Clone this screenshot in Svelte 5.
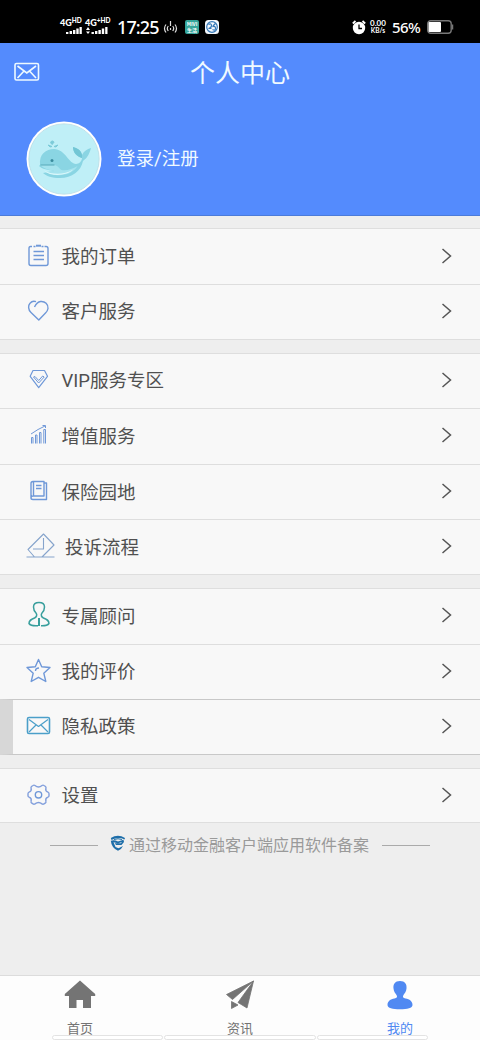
<script lang="ts">
	interface Item {
		icon: string;
		label: string;
		pressed?: boolean;
	}

	const groups: Item[][] = [
		[
			{ icon: 'order', label: '我的订单' },
			{ icon: 'heart', label: '客户服务' }
		],
		[
			{ icon: 'vip', label: 'VIP服务专区' },
			{ icon: 'chart', label: '增值服务' },
			{ icon: 'book', label: '保险园地' },
			{ icon: 'complaint', label: '投诉流程' }
		],
		[
			{ icon: 'adviser', label: '专属顾问' },
			{ icon: 'star', label: '我的评价' },
			{ icon: 'mail', label: '隐私政策', pressed: true }
		],
		[{ icon: 'gear', label: '设置' }]
	];

	const tabs = [
		{ icon: 'home', label: '首页' },
		{ icon: 'news', label: '资讯' },
		{ icon: 'mine', label: '我的' }
	];

	let active = $state('mine');
</script>

<div class="page">
	<div class="status">
		<div class="signal first">
			<span class="net">4G<small>HD</small></span>
			<svg width="17" height="7" viewBox="0 0 17 7" fill="#fff">
				<path d="M1 5h2.400v2H1zM4.600 4h2.400v3h-2.400zM8 3h2.400v4h-2.400zM11.300 1.500h2.400V7h-2.400zM14.500 0h2.300v7h-2.300z" />
			</svg>
		</div>
		<div class="signal second">
			<span class="net">4G<small>+HD</small></span>
			<svg width="22" height="7" viewBox="0 0 22 7" fill="#fff">
				<path d="M0 3l2-3 2 3zM0 4.500h4L2 7zM5.500 5h2.400v2H5.500zM9 4h2.400v3H9zM12.400 3h2.400v4h-2.400zM15.800 1.500h2.400V7h-2.400zM19.200 0h2.300v7h-2.300z" />
			</svg>
		</div>
		<span class="time">17:25</span>
		<svg class="cast" width="15" height="13" viewBox="0 0 15 13" fill="none" stroke="#ddd" stroke-width="1.200">
			<path d="M3 3.500q-3 4 0 8M5.300 5q-2 2.500 0 5M12 3.500q3 4 0 8M9.700 5q2 2.500 0 5M7.500 0v5M7.500 7v2" />
		</svg>
		<span class="app-badge">MIVI<br />生活</span>
		<svg class="app-logo" width="14" height="14" viewBox="0 0 14 14">
			<rect width="14" height="14" rx="3.500" fill="#f4f8fc" />
			<g fill="none" stroke="#3478b8" stroke-width="1.200">
				<circle cx="7" cy="7" r="5.300" />
				<path d="M3.500 4.500q3-1.500 3 1t-3 3h3M7.500 9.500q3 1.500 3-1t-2-2 2-3" />
			</g>
		</svg>
		<svg class="alarm" width="14" height="15" viewBox="0 0 14 15">
			<circle cx="7" cy="8" r="6.200" fill="#fff" />
			<path d="M.8 3.500L3.500 1M13.200 3.500L10.500 1" stroke="#fff" stroke-width="1.800" />
			<path d="M7 4.500V8.500h3" fill="none" stroke="#000" stroke-width="1.300" />
		</svg>
		<span class="speed">0.00<small>KB/s</small></span>
		<span class="percent">56%</span>
		<svg class="battery" width="27" height="14" viewBox="0 0 27 14">
			<rect x=".7" y=".7" width="23.500" height="12.600" rx="3" fill="none" stroke="#777" stroke-width="1.400" />
			<path d="M25.500 4.500v5" stroke="#777" stroke-width="1.500" />
			<rect x="1.500" y="2" width="12.500" height="10" rx="1" fill="#fff" />
		</svg>
	</div>

	<header>
		<div class="bar">
			<svg class="message" width="26" height="20" viewBox="0 0 26 20" fill="none" stroke="#eefaff" stroke-width="1.600">
				<rect x="1" y="1.500" width="23.500" height="16.500" rx="1.500" />
				<path d="M3.500 4l9.300 7L22 4M3.500 16l6.500-7M22 16l-6.500-7" />
			</svg>
			<h1>个人中心</h1>
		</div>
		<div class="user">
			<svg width="76" height="76" viewBox="0 0 76 76">
				<circle cx="38" cy="38" r="37.500" fill="#fff" />
				<circle cx="38" cy="38" r="35" fill="#bfeff7" />
				<circle cx="38" cy="38" r="35.200" fill="none" stroke="#a9d5df" stroke-width=".7" />
				<path d="M14 44C13 33 20 28 28 28c11 0 15 15 22 15 3 0 6-3 6-6-6-2-9-6-9-11 4 1 8 3 9 8 2-4 5-6 9-7-2 7-4 10-8 13-2 10-11 17-23 17-8 0-14-2-17-5l11-2c-6-1-12-2-15-5z" fill="#8ad5e3" />
				<path d="M47 26c4 1 8 3 9 8l0 3c-6-2-9-6-9-11z" fill="#72c6d5" />
				<path d="M14.500 44h14c4 1 5 4 7 5 5 1 11-1 16-4-4 7-13 10-22 9l-11-3 10-1c-6-1-12-3-14-6z" fill="#a5e3ee" />
				<path d="M18 49.500c7 4 20 5 29-1-5 6-22 8-29 1z" fill="#dcf8fb" />
				<path d="M14.500 44h14" stroke="#59a9b8" />
				<circle cx="26" cy="39.500" r="1.500" fill="#3a8b9d" />
				<path d="M26 23.500q-3-3 .5-3.500 3 .8-.5 3.500zM22 24l4 1.500-2 .5zM32 24l-4 1.500 2 .5z" fill="#7ccbd9" stroke="#7ccbd9" />
			</svg>
			<span>登录/注册</span>
		</div>
	</header>

	<main>
		{#each groups as group}
			<section>
				{#each group as item}
					<div class="row" class:pressed={item.pressed} class:wide={item.icon === 'complaint'}>
						<svg class="icon" width="31" height="30" viewBox="0 0 31 30">
							{#if item.icon === 'order'}
								<path d="M8 5.500H6.500Q5 5.500 5 7.500v15q0 2 2 2h15q2 0 2-2v-15q0-2-2-2h-1.500M9.500 5.500h2M17.500 5.500h2" />
								<path d="M12 4.700h5" stroke-width="2" />
								<path d="M9.500 10.500h10.500M9.500 14.500h10.500M9.500 18.500h10.500" />
							{:else if item.icon === 'heart'}
								<path d="M10.500 11c1.500-3 3-5 6-5.500 4.500-.6 8 3 7.500 7-.3 2-1 3-2.500 4.500L14.800 24 7 16.500C4 13.500 4 9.500 6 7.300 7.800 5.200 10 5 12 5.700" />
							{:else if item.icon === 'vip'}
								<path d="M9 5.500h11.500l3 5.800-8.800 11.400L6.200 11.300z" stroke-width="1.200" />
								<path d="M9.500 12l5.200 6 5.500-6-1.500-1-4 4.500-3.700-4z" stroke-width="1" />
							{:else if item.icon === 'chart'}
								<path d="M7.500 23.500v-6h1.500v6M11.500 23.500v-8.500H13v8.500M15.500 23.500V12.500H17v11M19.800 23.500V9.500h1.700v14M7 14l7-4.500 7-3.500M18.500 5.500h3V8" stroke-width="1" />
							{:else if item.icon === 'book'}
								<path d="M7 7.500q0-2 2-2h11V20H9q-2 0-2 2zM7 22q0 1.500 2 1.500h13.500V7H20M9.500 5.500V20" />
								<path d="M12 9.500h5.500M12 12.500h5.500" />
							{:else if item.icon === 'complaint'}
								<path d="M19.500 3L30 14 18 26h-7.500L4 18.500zM19.500 7v11H9M2.500 26h28" stroke-width="1.100" stroke="#86a4cc" />
							{:else if item.icon === 'adviser'}
								<g stroke="#399f9d" stroke-width="1.500">
									<path d="M12 13c-2-2-2.500-4-2.500-6 0-3 2-4.500 5.500-4.500S20.500 4 20.500 7c0 2-.5 4-2.500 6-1.500 2-.5 4 1.500 5 3.500 1.500 5.500 2.500 5.500 5.500-1 1.500-4 2.300-7 2.300h-1M14 25.800h-2c-3 0-6-.7-7-2.300 0-3 2-4 5.500-5.500 2-1 3-3 1.500-5" />
									<path d="M15 18v8" stroke-width="2" />
								</g>
							{:else if item.icon === 'star'}
								<path d="M14.500 3.500l3.200 7.200 8.300.8-6.200 5.700 2 8.300-7.300-4.200-7.300 4.200 2-8.300L3 11.500l8.300-.8zM11.500 15c0-2 1.200-3 3.500-3" />
							{:else if item.icon === 'mail'}
								<g stroke="#4b9fc9" stroke-width="1.600">
									<rect x="3.500" y="6.500" width="22" height="16" rx="1.500" />
									<path d="M5 8.500l9.500 7 9.500-7M5 21l7-7M24 21l-7-7" stroke-width="1.200" />
								</g>
							{:else}
								<path d="M9 5.500Q10 4.800 11 5.500q3.500 3 7 0 1-.7 2 0l1.500 1q.8.700.4 1.700-.8 3 2 4 1.100.5 1.100 1.500v2q0 1-1.100 1.500-2.800 1-2 4 .4 1-.4 1.700l-1.500 1q-1 .7-2 0-3.500-3-7 0-1 .7-2 0l-1.500-1q-.8-.7-.4-1.700.8-3-2-4Q4 16.700 4 15.700v-2q0-1 1.100-1.500 2.800-1 2-4-.4-1 .4-1.700z" stroke="#829fdc" />
								<circle cx="14.500" cy="14.800" r="3.200" />
							{/if}
						</svg>
						<span>{item.label}</span>
						<svg class="arrow" width="12" height="18" viewBox="0 0 12 18">
							<path d="M1.500 2L9.500 9l-8 7" />
						</svg>
					</div>
				{/each}
			</section>
		{/each}

		<div class="record">
			<i></i>
			<svg width="16" height="16" viewBox="0 0 16 16">
				<path d="M.8 3Q8-1.500 15 3l-.5 1.500Q8 1.500 1.500 5zM.8 5.800Q4 4.500 8 6.500l5.500-1.800L14 7l-2.500 3H6L4.800 8.300h6L12 7 8 8.200 3.500 7.300l2 4.700 3 1.200 4.500-2.200q-1.500 3.500-5 4.800Q1.500 13 .8 5.800z" fill="#1e6ea9" />
				<path d="M4 4.500q4-1.500 8 0" fill="none" stroke="#2170a8" />
			</svg>
			<span>通过移动金融客户端应用软件备案</span>
			<i></i>
		</div>
	</main>

	<nav>
		{#each tabs as tab}
			<button class:active={active === tab.icon} onclick={() => (active = tab.icon)}>
				<svg width="32" height="30" viewBox="0 0 32 30" fill="currentColor">
					{#if tab.icon === 'home'}
						<path d="M16 .5L.8 14v2H5v12h7.500v-8h6.500v8H27V16h4.200v-2z" />
					{:else if tab.icon === 'news'}
						<path d="M29.500 1L2.500 14.500 8.500 19.500zM29.500 1L14 22.500l9 5.500zM7.500 21.500l6.500 3.500-6.500 3.500z" stroke="currentColor" stroke-width=".8" />
					{:else}
						<path d="M16 1c-5 0-7 3.200-6.500 7.500.3 3.300 2 5 3 6.500 1.200 2 .5 3-2 3.500C6.500 19.300 3.500 21 3.500 25c0 3 5 4.300 12.500 4.300S28.500 28 28.500 25c0-4-3-5.700-7-6.500-2.500-.5-3.200-1.500-2-3.500 1-1.500 2.700-3.200 3-6.500C23 4.200 21 1 16 1z" />
					{/if}
				</svg>
				<span>{tab.label}</span>
			</button>
		{/each}
		<div class="edge"><i></i><i class="middle"></i><i></i></div>
	</nav>
</div>

<style>
	:global(body) {
		margin: 0;
	}

	.page {
		display: flex;
		flex-direction: column;
		width: 480px;
		height: 1040px;
		overflow: hidden;
		background: #eee;
		color: #505050;
		font-family: Roboto, 'Noto Sans CJK SC', sans-serif;
	}

	svg {
		display: block;
		flex-shrink: 0;
	}

	.status {
		display: flex;
		align-items: center;
		box-sizing: border-box;
		height: 43px;
		padding: 11px 26px 0 60px;
		background: #000;
		color: #fff;
		font-family: Lato, sans-serif;
		line-height: 1;
	}

	.signal {
		display: flex;
		flex-direction: column;
		align-items: flex-start;
		margin-top: -3px;
	}

	.first {
		width: 25px;
	}

	.second {
		width: 32px;
	}

	.signal svg {
		margin-left: 5px;
	}

	.second svg {
		margin-left: 1px;
	}

	.net {
		display: flex;
		height: 9px;
		font-size: 9px;
		font-weight: 900;
		white-space: nowrap;
	}

	.net small {
		font-size: 6.5px;
	}

	.time {
		width: 46px;
		font: 500 18px/1 'Noto Sans', sans-serif;
		letter-spacing: -0.9px;
	}

	.app-badge {
		box-sizing: border-box;
		width: 14px;
		height: 14px;
		margin: 0 6px 0 7px;
		padding-top: 1px;
		border-radius: 2px;
		background: #35a69b;
		font: 700 5px/6px 'Noto Sans CJK SC', sans-serif;
		text-align: center;
	}

	.alarm {
		margin-left: auto;
	}

	.speed {
		width: 18px;
		margin-left: 3px;
		font-size: 8px;
		font-weight: 700;
		line-height: 8px;
		text-align: center;
	}

	.speed small {
		display: block;
		font-size: 6.5px;
	}

	.percent {
		width: 30px;
		margin: 0 5px 0 5px;
		font: 500 15px/1 'Noto Sans', sans-serif;
		letter-spacing: -0.6px;
	}

	header {
		box-sizing: border-box;
		height: 173px;
		border-bottom: 1px solid #4b7bd9;
		background: #548bfd;
		color: #f0faff;
	}

	.bar {
		display: flex;
		align-items: center;
		height: 58px;
	}

	.message {
		margin-left: 14px;
	}

	h1 {
		flex: 1;
		margin: 4px 40px 0 0;
		font-size: 25px;
		font-weight: 400;
		line-height: 54px;
		text-align: center;
	}

	.user {
		display: flex;
		align-items: center;
		gap: 15px;
		height: 76px;
		padding: 20px 0 0 26px;
	}

	.user span {
		margin-top: -4px;
		font-size: 18.5px;
	}

	main {
		flex: 1;
		padding-top: 12.4px;
	}

	section {
		margin-bottom: 13px;
	}

	.row {
		display: flex;
		align-items: center;
		box-sizing: border-box;
		height: 55.6px;
		padding: 0 27px 0 24px;
		border-top: 1px solid #dedede;
		background: #f8f8f8;
		font-size: 18.5px;
	}

	.row:last-child {
		border-bottom: 1px solid #dedede;
	}

	.row span {
		flex: 1;
		margin-top: 2px;
		line-height: 27px;
	}

	.wide span {
		padding-left: 3.5px;
	}

	.pressed {
		padding-left: 11px;
		border-left: 13px solid #d7d7d7;
		border-top-color: #c8c8c8;
	}

	.pressed.row {
		border-bottom-color: #c8c8c8;
	}

	.icon {
		margin: -2px 6.5px 0 0;
		fill: none;
		stroke: #6f98d8;
		stroke-width: 1.4;
		stroke-linejoin: round;
	}

	.arrow {
		margin-top: -2px;
		fill: none;
		stroke: #555;
		stroke-width: 1.5;
	}

	.record {
		display: flex;
		align-items: center;
		height: 18px;
		padding: 0 50px;
		color: #9a9a9a;
		font-size: 16px;
		line-height: 18px;
		white-space: nowrap;
	}

	.record i {
		width: 48px;
		height: 1.5px;
		background: #aaa;
	}

	.record svg {
		margin: -5px 3px 0 12px;
	}

	.record span {
		margin-top: 2px;
	}

	.record span + i {
		margin-left: auto;
	}

	nav {
		position: relative;
		display: flex;
		box-sizing: border-box;
		height: 65px;
		border-top: 1px solid #dcdcdc;
		background: #fdfdfd;
	}

	button {
		display: flex;
		flex: 1;
		flex-direction: column;
		align-items: center;
		padding: 4px 0 0;
		border: 0;
		background: none;
		color: #747474;
		font-family: inherit;
		font-size: 13px;
	}

	button span {
		margin-top: 9px;
		line-height: 20px;
	}

	.active {
		color: #5089f2;
	}

	/* top edge of the panel tucked under the tab bar */
	.edge {
		position: absolute;
		right: 52px;
		bottom: 0;
		left: 52px;
		display: flex;
		gap: 1px;
	}

	.edge i {
		box-sizing: border-box;
		width: 111px;
		height: 5px;
		border: 1px solid #e3e3e3;
		border-radius: 3px;
		background: #fff;
	}

	.edge .middle {
		width: 152px;
	}
</style>
